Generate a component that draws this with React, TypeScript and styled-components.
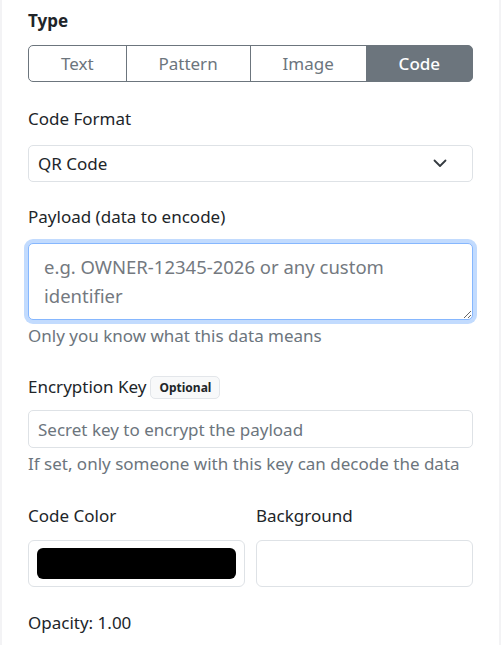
import React, { useState } from 'react';
import styled, { createGlobalStyle } from 'styled-components';

const GlobalStyle = createGlobalStyle`
  html, body {
    margin: 0;
    padding: 0;
    background: #ffffff;
  }
  * {
    box-sizing: border-box;
  }
`;

const Panel = styled.div`
  width: 501px;
  min-height: 645px;
  padding: 8px 26px 20px 26px;
  background: #ffffff;
  border-left: 2px solid #f3f3f5;
  border-right: 2px solid #f3f3f5;
  font-family: 'Noto Sans', 'Open Sans', sans-serif;
  color: #343a40;
  display: flex;
  flex-direction: column;
`;

const Field = styled.div<{ $gap?: number }>`
  display: flex;
  flex-direction: column;
  margin-bottom: ${(p) => p.$gap ?? 24}px;
`;

const Label = styled.label<{ $bold?: boolean; $mb?: number }>`
  display: flex;
  align-items: center;
  gap: 4px;
  font-size: 17px;
  font-weight: ${(p) => (p.$bold ? 700 : 400)};
  color: #212529;
  line-height: 26px;
  margin-bottom: ${(p) => p.$mb ?? 13}px;
`;

const Badge = styled.span`
  font-size: 12px;
  font-weight: 700;
  color: #212529;
  background: #f8f9fa;
  border: 1px solid #e3e6ea;
  border-radius: 5px;
  padding: 2px 8px;
  line-height: 17px;
`;

const SegmentGroup = styled.div`
  display: flex;
  width: 100%;
`;

const Segment = styled.button<{ $active?: boolean }>`
  flex: 1 1 auto;
  height: 37px;
  font-family: inherit;
  font-size: 17px;
  font-weight: ${(p) => (p.$active ? 500 : 400)};
  color: ${(p) => (p.$active ? '#ffffff' : '#6c757d')};
  background: ${(p) => (p.$active ? '#6c757d' : '#ffffff')};
  border: 1px solid #6c757d;
  margin-left: -1px;
  padding: 0 12px;
  cursor: pointer;

  &:first-child {
    margin-left: 0;
    border-radius: 5px 0 0 5px;
  }
  &:last-child {
    border-radius: 0 5px 5px 0;
  }
`;

const SelectBox = styled.div`
  height: 37px;
  border: 1px solid #dee2e6;
  border-radius: 5px;
  display: flex;
  align-items: center;
  justify-content: space-between;
  padding: 0 25px 0 9px;
  font-size: 17px;
  color: #212529;
`;

const TextArea = styled.textarea`
  display: block;
  width: 100%;
  height: 77px;
  resize: vertical;
  font-family: inherit;
  font-size: 18.5px;
  line-height: 29px;
  padding: 8px 15px;
  color: #212529;
  border: 1px solid #86b7fe;
  border-radius: 5px;
  outline: none;
  box-shadow: 0 0 0 4px #c2dbfe;

  &::placeholder {
    color: #74797f;
  }
`;

const TextInput = styled.input`
  width: 100%;
  height: 38px;
  font-family: inherit;
  font-size: 17px;
  padding: 0 9px;
  color: #212529;
  border: 1px solid #dee2e6;
  border-radius: 5px;
  outline: none;

  &::placeholder {
    color: #6c757d;
  }
`;

const Help = styled.div`
  font-size: 17px;
  color: #6c757d;
  line-height: 25px;
  margin-top: 3px;
`;

const ColorRow = styled.div`
  display: grid;
  grid-template-columns: 1fr 1fr;
  column-gap: 11px;
  margin-bottom: 23px;
`;

const ColorBox = styled.div`
  height: 47px;
  border: 1px solid #dee2e6;
  border-radius: 6px;
  padding: 7px 8px;
  display: flex;
`;

const Swatch = styled.div<{ $color: string }>`
  flex: 1;
  border-radius: 6px;
  background: ${(p) => p.$color};
`;

const ValueLabel = styled.div`
  font-size: 17px;
  color: #212529;
  line-height: 26px;
`;

const Chevron = () => (
  <svg width="14" height="9" viewBox="0 0 14 9" fill="none">
    <path d="M1.5 1.5 L7 7 L12.5 1.5" stroke="#343a40" strokeWidth="1.8" strokeLinecap="round" strokeLinejoin="round" />
  </svg>
);

const types = ['Text', 'Pattern', 'Image', 'Code'];

export default function App() {
  const [type, setType] = useState('Code');
  const [payload, setPayload] = useState('');
  const [key, setKey] = useState('');

  return (
    <>
      <GlobalStyle />
      <Panel>
        <Field $gap={24}>
          <Label $bold $mb={11}>Type</Label>
          <SegmentGroup>
            {types.map((t) => (
              <Segment key={t} $active={t === type} onClick={() => setType(t)}>
                {t}
              </Segment>
            ))}
          </SegmentGroup>
        </Field>

        <Field $gap={22}>
          <Label>Code Format</Label>
          <SelectBox>
            <span>QR Code</span>
            <Chevron />
          </SelectBox>
        </Field>

        <Field $gap={26}>
          <Label>Payload (data to encode)</Label>
          <TextArea
            value={payload}
            onChange={(e) => setPayload(e.target.value)}
            placeholder="e.g. OWNER-12345-2026 or any custom identifier"
          />
          <Help>Only you know what this data means</Help>
        </Field>

        <Field $gap={27}>
          <Label $mb={10}>
            Encryption Key <Badge>Optional</Badge>
          </Label>
          <TextInput
            value={key}
            onChange={(e) => setKey(e.target.value)}
            placeholder="Secret key to encrypt the payload"
          />
          <Help>If set, only someone with this key can decode the data</Help>
        </Field>

        <ColorRow>
          <Field $gap={0}>
            <Label $mb={11}>Code Color</Label>
            <ColorBox>
              <Swatch $color="#000000" />
            </ColorBox>
          </Field>
          <Field $gap={0}>
            <Label $mb={11}>Background</Label>
            <ColorBox>
              <Swatch $color="#ffffff" />
            </ColorBox>
          </Field>
        </ColorRow>

        <ValueLabel>Opacity: 1.00</ValueLabel>
      </Panel>
    </>
  );
}
